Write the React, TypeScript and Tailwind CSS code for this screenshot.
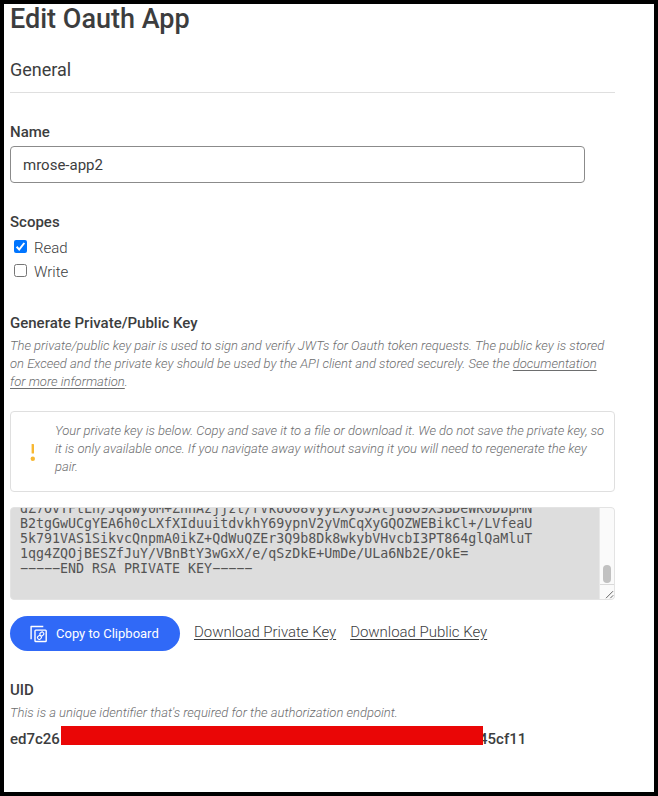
const keyLines = [
  'dZ7OvTFtLn/Jq8wy0M+ZnnAzjjzt/rVkUO08VyyEXyUJAlju8O9X3BDeWK0DbpMN',
  'B2tgGwUCgYEA6h0cLXfXIduuitdvkhY69ypnV2yVmCqXyGQOZWEBikCl+/LVfeaU',
  '5k791VAS1SikvcQnpmA0ikZ+QdWuQZEr3Q9b8Dk8wkybVHvcbI3PT864glQaMluT',
  '1qg4ZQOjBESZfJuY/VBnBtY3wGxX/e/qSzDkE+UmDe/ULa6Nb2E/OkE=',
  '−−−−−END RSA PRIVATE KEY−−−−−',
];

function CopyIcon() {
  return (
    <svg width="18" height="18" viewBox="0 0 18 18" fill="none" stroke="#fff" strokeWidth="1.4" strokeLinejoin="round">
      <path d="M1.1 14.3V1.5H13.3" />
      <rect x="5" y="5.1" width="11.2" height="11.4" rx="0.8" />
      <g strokeWidth="1.1">
        <rect x="9.9" y="7.3" width="3.9" height="3.4" rx="1.4" transform="rotate(-40 11.8 9)" />
        <rect x="7.5" y="10.8" width="3.9" height="3.4" rx="1.4" transform="rotate(-40 9.4 12.5)" />
      </g>
    </svg>
  );
}

function Heading({ children }: { children: string }) {
  return <h3 className="h-[18px] text-[15px] leading-[18px] font-medium">{children}</h3>;
}

export default function App() {
  return (
    <main className="h-[796px] w-[658px] overflow-hidden border-4 border-black bg-white pl-[6px] font-['Roboto',sans-serif] whitespace-nowrap text-[#3c3d3e]">
      <h1 className="h-[30px] text-[27px] leading-[30px] font-medium">Edit Oauth App</h1>
      <div className="mt-[22px] flex h-[37px] w-[605px] border-b border-[#dfdfdf]">
        <h2 className="text-[18px] leading-[28px]">General</h2>
      </div>

      <section className="mt-[30px]">
        <Heading>Name</Heading>
        <div className="mt-[5px] flex h-[37px] w-[575px] items-center rounded-[4px] border border-[#8b8b8b] px-3 pt-[2px] text-[15px]">
          mrose-app2
        </div>
      </section>

      <section className="mt-[30px]">
        <Heading>Scopes</Heading>
        <div className="mt-[5px] flex h-6 items-center pl-1 text-[15px] font-light">
          <svg className="mr-[7px] mb-[3px]" width="13" height="13" viewBox="0 0 13 13">
            <rect width="13" height="13" rx="2" fill="#0075ff" />
            <path d="M2.6 6.8 5.2 9.5 10.3 3" fill="none" stroke="#fff" strokeWidth="2" />
          </svg>
          Read
        </div>
        <div className="flex h-6 items-center pl-1 text-[15px] font-light">
          <span className="mr-[7px] mb-[3px] size-[13px] rounded-[2.5px] border border-[#767676]" />
          Write
        </div>
      </section>

      <section className="mt-[30px]">
        <Heading>Generate Private/Public Key</Heading>
        <p className="mt-[5px] text-[13px] leading-[18px] font-light text-[#6d6e6f] italic">
          The private/public key pair is used to sign and verify JWTs for Oauth token requests. The public key is stored
          <br />
          on Exceed and the private key should be used by the API client and stored securely. See the{' '}
          <span className="underline underline-offset-2">documentation</span>
          <br />
          <span className="underline underline-offset-2">for more information</span>.
        </p>

        <div className="mt-[20px] flex h-[81px] w-[605px] rounded-[4px] border border-[#dfdfdf]">
          <svg className="mt-[32px] ml-[19px] shrink-0" width="6" height="18" viewBox="0 0 6 18">
            <rect x="1.6" y="0" width="2.4" height="9.5" rx="0.6" fill="#f7b731" />
            <circle cx="2.8" cy="14.8" r="2.2" fill="#f7b731" />
          </svg>
          <p className="mt-[10px] ml-[19px] text-[13px] leading-[18px] font-light text-[#6d6e6f] italic">
            Your private key is below. Copy and save it to a file or download it. We do not save the private key, so
            <br />
            it is only available once. If you navigate away without saving it you will need to regenerate the key
            <br />
            pair.
          </p>
        </div>

        <div className="mt-[15px] flex h-[93px] w-[605px] justify-between overflow-hidden rounded-[4px] border border-[#e3e3e3] bg-[#ddd]">
          <pre className="-mt-[7px] ml-[9px] h-[90px] font-['DejaVu_Sans_Mono',monospace] text-[13.31px] leading-[15px] text-[#545454]">
            {keyLines.join('\n')}
          </pre>
          <div className="flex w-[15px] shrink-0 flex-col border-l border-[#e8e8e8] bg-[#fafafa]">
            <div className="flex h-[77px] flex-col items-center justify-end border-b border-[#d9d9d9] pb-[1px]">
              <div className="h-[18px] w-2 rounded-full bg-[#c1c1c1]" />
            </div>
            <svg width="14" height="14" viewBox="0 0 14 14" fill="none" stroke="#555" strokeWidth="0.9">
              <path d="M6 13.2 13 6.2M10.3 13.2 13.2 10.3" />
            </svg>
          </div>
        </div>

        <div className="mt-4 flex h-[35px]">
          <div className="flex w-[170px] items-center rounded-full bg-[#3069f7] pl-5 text-[13px] text-white">
            <CopyIcon />
            <span className="ml-2">Copy to Clipboard</span>
          </div>
          <div className="ml-[14px] flex gap-[14px] text-[15px] leading-[32px] font-light tracking-[-0.03px]">
            <span className="underline underline-offset-2">Download Private Key</span>
            <span className="underline underline-offset-2">Download Public Key</span>
          </div>
        </div>
      </section>

      <section className="mt-[30px]">
        <Heading>UID</Heading>
        <p className="mt-[5px] text-[13px] leading-[18px] font-light text-[#6d6e6f] italic">
          This is a unique identifier that's required for the authorization endpoint.
        </p>
        <div className="mt-[3px] flex h-[22px] text-[15px] leading-[28px] font-medium">
          <span className="w-[51px]">ed7c26</span>
          <span className="z-10 mt-[0.5px] h-[19.5px] w-[422px] bg-[#ea0606]" />
          <span className="-ml-[4px]">45cf11</span>
        </div>
      </section>
    </main>
  );
}
